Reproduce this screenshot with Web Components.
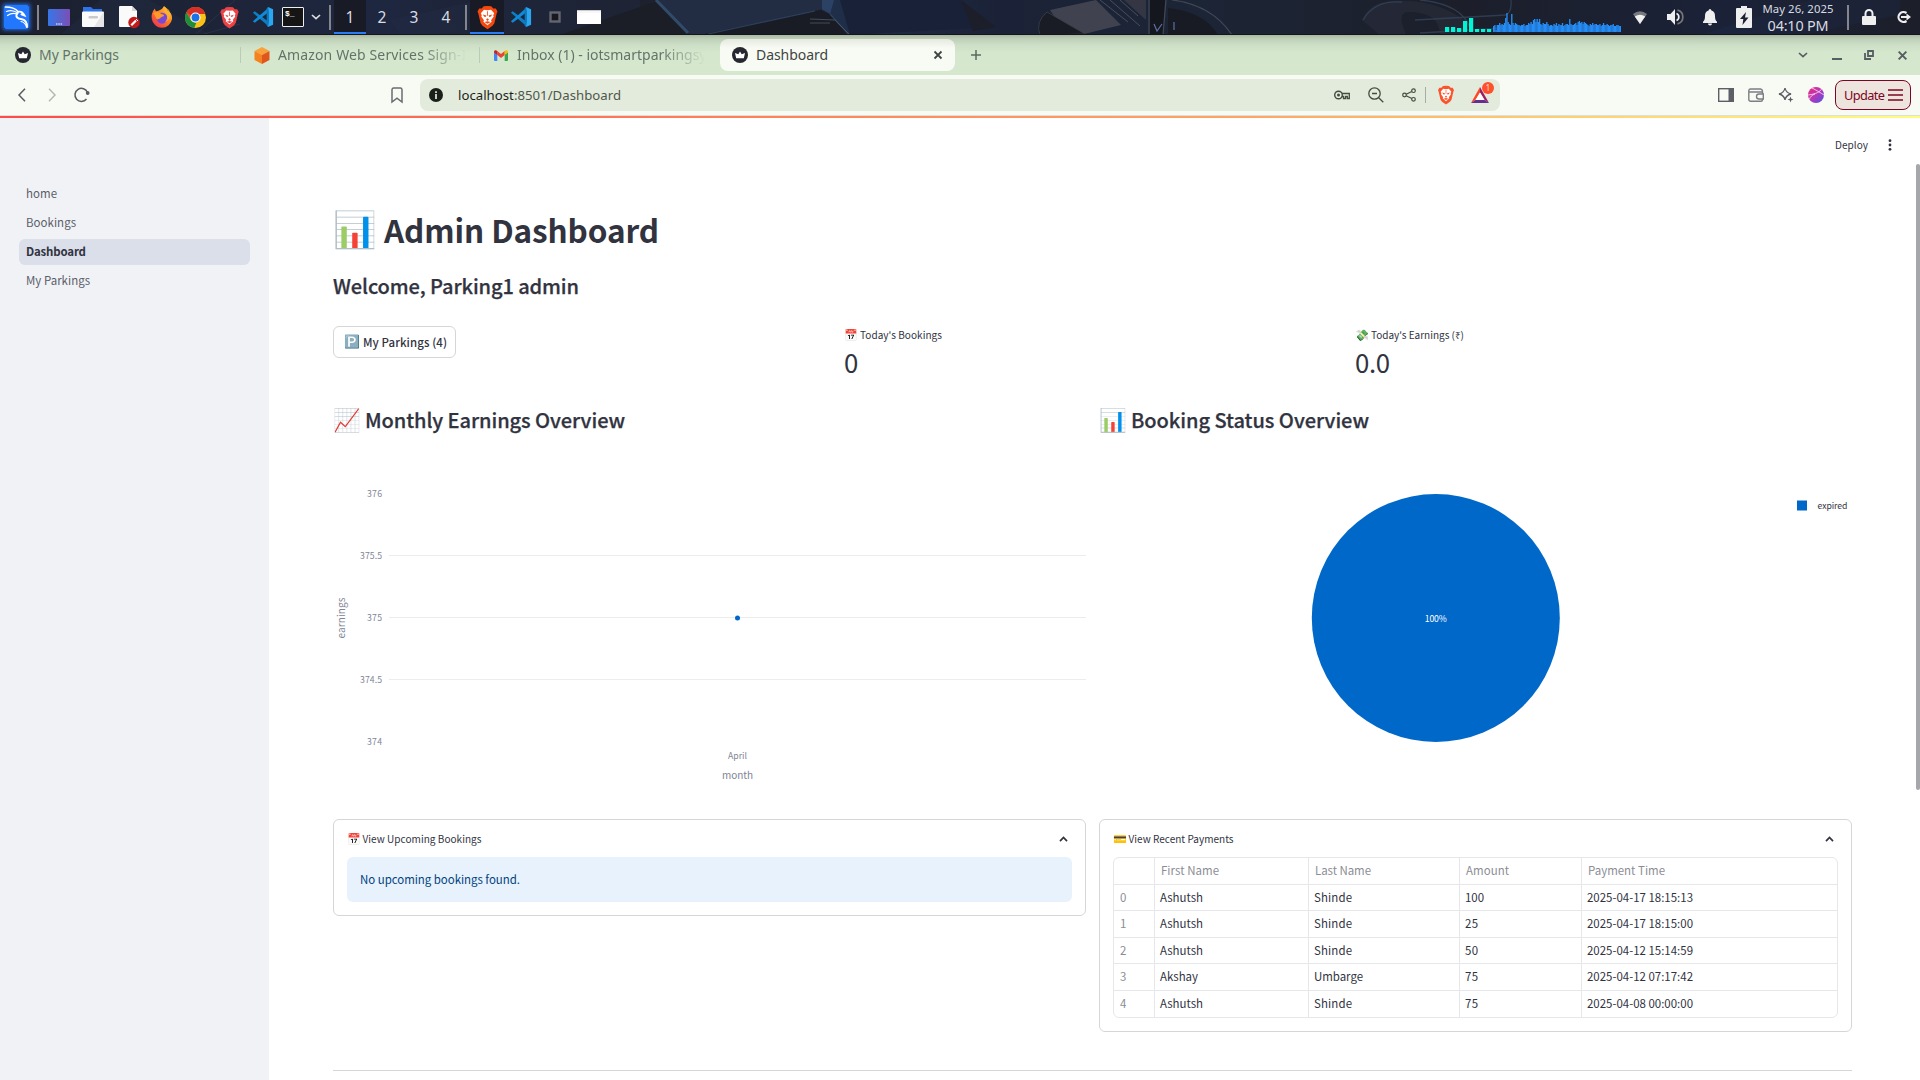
<!DOCTYPE html>
<html lang="en">
<head>
<meta charset="utf-8">
<title>Dashboard</title>
<style>
  html, body { margin: 0; height: 100%; background: #fff; }
  body { width: 1920px; height: 1080px; overflow: hidden; display: flex; flex-direction: column;
    font-family: "Noto Sans CJK SC", "Noto Sans", sans-serif; color: #31333f; }
  .page { flex: 1; display: flex; min-height: 0; }
</style>
</head>
<body>
<desktop-panel></desktop-panel>
<tab-strip></tab-strip>
<nav-toolbar></nav-toolbar>
<div class="page">
  <side-nav></side-nav>
  <dashboard-view></dashboard-view>
</div>
<script>
const BRAVE_FACE = `<path d="M12 1 15.6 1.2 17.6 3.3 20 3.4 21.6 6.2 20.8 8.2 18.6 17.6 16.8 20 12 23.4 7.2 20 5.4 17.6 3.2 8.2 2.4 6.2 4 3.4 6.4 3.3 8.4 1.2Z"/><path fill="#fff" d="M12 5 15.4 4.6 18.4 8 17.5 9.8 18 11 15.4 14.6 16 16 12 19.4 8 16 8.6 14.6 6 11 6.5 9.8 5.6 8 8.6 4.6Z"/><g fill="currentColor"><path d="M7.6 9.1 11 10.1 10.2 11.4 8.6 11Z M16.4 9.1 13 10.1 13.8 11.4 15.4 11Z M12 12.6 13.4 14 12 15.4 10.6 14Z M9 16.4 12 15.6 15 16.4 12 18Z"/><path d="M11.6 6h.8v4.4h-.8z"/></g>`;
const CROWN = `<circle cx="8" cy="8" r="8" fill="#262730"/><path fill="#fff" d="M8 4.600 9.700 7.300 13 6 11.800 11.200H4.200L3 6 6.300 7.300Z"/>`;
const VSCODE = `<path fill="#0a7fc8" d="M0 7.4 2 5.8 17 17.2V22Z"/><path fill="#0f8ad6" d="M0 16.6 2 18.2 17 6.8V2Z"/><path fill="#2aa7f0" d="M16.5 1 22 3.6V20.4L16.5 23Z"/><path fill="#1177b8" d="M16.5 1 17.5 6.6V17.4L16.5 23 15 21.6V2.4Z"/>`;
const ICONS = {
  kali: [25,24,`<rect width="25" height="24" rx="2" fill="#2277ff"/><g fill="none" stroke="#fff" stroke-linecap="round"><path stroke-width="1.700" d="M1.500 2C6 2 11 3 14 6.500"/><path stroke-width="1.200" d="M2.500 6.500C7 4.500 11 6 14 8M3.500 10.500C7 8 10 8 13 9"/><path stroke-width="1.900" d="M14 6.800C17 6 19 7.500 20.500 10.500L17.500 9.300M13.500 8C10.500 12 14 13.800 18 14.300 21.500 15 23 18 23 22"/><path stroke-width="1.100" d="M22.500 22C21.500 18 19.500 17 17 16.500"/></g>`],
  desktop: [22,17,`<defs><linearGradient id="a"><stop stop-color="#3677e8"/><stop offset="1" stop-color="#7b4fb5"/></linearGradient></defs><rect width="22" height="17" rx="1" fill="url(#a)"/><path d="M8 15h1.500M10.300 15h1.500M12.600 15h1.500" stroke="#fff" stroke-width="1.200"/>`],
  files: [22,20,`<path fill="#2f74e6" d="M1 0h8l2 2h9v5H1z"/><rect y="4.500" width="22" height="15.500" rx="1" fill="#fafafa"/><path d="M21 6 12 20h9a1 1 0 0 0 1-1V6z" fill="#e6e6e6"/><rect x="6.500" y="9" width="9.500" height="2.500" rx="1.200" fill="#c9c9c9"/>`],
  editor: [21,22,`<path fill="#fafafa" d="M1 0h12l5 5v16H1a1 1 0 0 1-1-1V1a1 1 0 0 1 1-1z"/><path fill="#d5d5d5" d="M13 0v5h5z"/><circle cx="15" cy="16.500" r="5.700" fill="#c41a1a"/><path d="M12.300 19.200 17 14.500" stroke="#fff" stroke-width="2.200"/><path d="M17 13l2 2" stroke="#fff" stroke-width="1"/>`],
  firefox: [22,22,`<defs><linearGradient id="f" x1="1" y1="0" x2=".2" y2="1"><stop stop-color="#ffe04a"/><stop offset=".45" stop-color="#ff8a1f"/><stop offset="1" stop-color="#f0324e"/></linearGradient></defs><path fill="url(#f)" d="M13 0C15 1.500 16 3 16.500 5 19 5 21.500 9 21 13A10.200 10.200 0 0 1 .8 13C.2 9 1 5.500 4 2.500 4 4 4.500 5 5.500 5.300 8 4.500 11 4 13 0Z"/><circle cx="11" cy="12.200" r="5.500" fill="#7a48d8"/><path fill="#ff9a2a" d="M2 7.500C5 5 9 6 10 8c2 0 3 .8 3 2-2 .5-3 1-4 2.500l-3 1C5 12 4 9 2 7.500Z"/><path fill="#ffb52e" d="M13 6c4 2 4 7 1 10 4-1 7-6 4-12L14 1Z" opacity=".75"/>`],
  chrome: [24,24,`<circle cx="12" cy="12" r="12" fill="#fbc116"/><path fill="#ea4335" d="M1.600 6A12 12 0 0 1 22.400 6H12A6 6 0 0 0 6.500 14.500Z"/><path fill="#d93025" d="M1.600 6A12 12 0 0 1 22.400 6l.7 2H12l-4 2Z"/><path fill="#1e8e3e" d="M1.600 6 6.800 15A6 6 0 0 0 13 18L10.500 23.900A12 12 0 0 1 1.600 6Z"/><circle cx="12" cy="12" r="5.800" fill="#fff"/><circle cx="12" cy="12" r="4.500" fill="#1a73e8"/>`],
  brave: [24,24,`<g fill="currentColor">${BRAVE_FACE}</g>`],
  vscode: [22,24,VSCODE],
  term: [22,20,`<rect x=".5" y=".5" width="21" height="19" rx=".5" fill="#151515" stroke="#eee"/>`],
  down: [10,6,`<path d="M1 1l4 3.700L9 1" fill="none" stroke="currentColor" stroke-width="1.700"/>`],
  sq: [12,12,`<rect x="1.500" y="1.500" width="9" height="9" fill="#17191f" stroke="#63656f" stroke-width="2.400"/>`],
  win: [24,14,`<rect width="24" height="14" fill="#fff"/><path d="M0 2h24" stroke="#ddd" stroke-width=".5"/><path d="M0 .5h24" stroke="#ccc"/>`],
  wifi: [14,14,`<path fill="#77797f" d="M7 14 0 4Q7-1.500 14 4Z"/><path fill="#efefef" d="M7 14 1.800 6.500Q7 2.800 12.200 6.500Z"/>`],
  volume: [17,16,`<path fill="#efefef" d="M0 5h3.500L8 0v16L3.500 11H0z"/><path fill="none" stroke="#efefef" stroke-width="1.700" d="M9.500 4.500a3.800 3.800 0 0 1 0 7"/><path fill="none" stroke="#777" stroke-width="1.700" d="M10.500 1.200a7 7 0 0 1 0 13.600"/>`],
  bell: [14,16,`<path fill="#efefef" d="M7 0a1.500 1.500 0 0 1 1.400 1.400C11 2 12 4 12 7c0 3 .5 4.500 2 5.700V14H0v-1.300C1.500 11.500 2 10 2 7c0-3 1-5 3.600-5.600A1.500 1.500 0 0 1 7 0ZM5 14.500h4a2 2 0 0 1-4 0Z"/>`],
  battery: [16,22,`<path fill="#efefef" d="M5 0h6v2h4a1 1 0 0 1 1 1v18a1 1 0 0 1-1 1H1a1 1 0 0 1-1-1V3a1 1 0 0 1 1-1h4z"/><path fill="#1d2230" d="M10 6 4 13h3.300L6.500 19 12.500 11.500H9z"/>`],
  lock: [14,16,`<path fill="#efefef" d="M1 7h12a1 1 0 0 1 1 1v7a1 1 0 0 1-1 1H1a1 1 0 0 1-1-1V8a1 1 0 0 1 1-1z"/><path fill="none" stroke="#efefef" stroke-width="2" d="M3.500 8V4.500a3.500 3.500 0 0 1 7 0V8"/>`],
  logout: [15,14,`<path fill="none" stroke="#efefef" stroke-width="2.200" d="M10.500 3A5 5 0 1 0 10.500 11"/><path fill="#efefef" d="M5 6h5.500V3.500L15 7l-4.500 3.500V8H5z"/>`],
  crown: [16,16,CROWN],
  aws: [16,17,`<path fill="#f9a13a" d="M8 0 15.500 4 8 8 .5 4Z"/><path fill="#f58220" d="M.5 4 8 8v9L.5 13Z"/><path fill="#e0571c" d="M15.500 4 8 8v9l7.500-4Z"/>`],
  gmail: [14,11,`<path fill="#4285f4" d="M0 2v8a1 1 0 0 0 1 1h2.300V4.500z"/><path fill="#34a853" d="M14 2v8a1 1 0 0 1-1 1h-2.300V4.500z"/><path fill="#ea4335" d="M3.300 1 7 4l3.700-3v4L7 8 3.300 5z"/><path fill="#c5221f" d="M0 2C0 0 2-.5 3.300 1v4L0 2.500z"/><path fill="#fbbc04" d="M14 2c0-2-2-2.500-3.300-1v4L14 2.500z"/>`],
  close: [10,10,`<path d="M1.500 1.500l7 7M8.500 1.500l-7 7" stroke="currentColor" stroke-width="1.800"/>`],
  plus: [10,10,`<path d="M5 0v10M0 5h10" stroke="#5d6862" stroke-width="1.500"/>`],
  min: [10,2,`<path d="M0 1h10" stroke="#565d63" stroke-width="2"/>`],
  restore: [10,10,`<path d="M4 1h5v5H4zM1 3v6h6" fill="none" stroke="#565d63" stroke-width="1.800"/>`],
  back: [8,14,`<path d="M7 .7 1 7l6 6.300" fill="none" stroke="currentColor" stroke-width="1.500"/>`],
  fwd: [8,14,`<path d="M1 .7 7 7l-6 6.300" fill="none" stroke="currentColor" stroke-width="1.500"/>`],
  reload: [16,16,`<path d="M13.500 5.500A6.500 6.500 0 1 0 12.500 12" fill="none" stroke="#585b66" stroke-width="1.500"/><circle cx="13.700" cy="6" r="1.900" fill="#585b66"/>`],
  bookmark: [12,16,`<path d="M1 2.500A1.700 1.700 0 0 1 2.700 1h6.600A1.700 1.700 0 0 1 11 2.500V15L6 11.200 1 15z" fill="none" stroke="#6a6c74" stroke-width="1.500"/>`],
  info: [14,14,`<circle cx="7" cy="7" r="7" fill="#1b1f1a"/><path d="M7 3.200v1.700M7 6v5" stroke="#e3ebdc" stroke-width="1.700"/>`],
  key: [16,10,`<circle cx="4.500" cy="5" r="3.800" fill="none" stroke="#444b41" stroke-width="1.400"/><circle cx="4.500" cy="5" r="1.500" fill="#444b41"/><path d="M8 3.500h7.300v5h-2v-2H11.500v2H9.500v-2H8" fill="none" stroke="#444b41" stroke-width="1.300"/>`],
  zoomout: [16,16,`<circle cx="6.500" cy="6.500" r="5.700" fill="none" stroke="#444b41" stroke-width="1.300"/><path d="M4 6.500h5M10.700 10.700 15.300 15.300" stroke="#444b41" stroke-width="1.300"/>`],
  share: [14,14,`<g fill="none" stroke="#444b41" stroke-width="1.200"><circle cx="2.500" cy="7" r="1.800"/><circle cx="11.500" cy="2.700" r="1.800"/><circle cx="11.500" cy="11.300" r="1.800"/><path d="M4.200 6.200 9.800 3.500M4.200 7.800 9.800 10.500"/></g>`],
  bat: [18,16,`<path fill="#ff4724" d="M9 0 0 16 4.500 13 9 5.500z"/><path fill="#9e1f63" d="M9 0v5.500L13.500 13 18 16z"/><path fill="#662d91" d="M0 16h18l-4.500-3h-9z"/><path fill="#fff" d="M9 5.500 4.500 13h9z"/>`],
  panel: [16,14,`<rect x=".7" y=".7" width="14.600" height="12.600" fill="none" stroke="#5d5f68" stroke-width="1.400"/><path d="M10.500 1h5v12h-5z" fill="#5d5f68"/>`],
  wallet: [16,14,`<g fill="none" stroke="#7b7e84" stroke-width="1.400"><path d="M14.500 4V3.500A2.500 2.500 0 0 0 12.500 1H2.500A1.800 1.800 0 0 0 .8 2.500v9a1.800 1.800 0 0 0 1.800 1.800H13a1.500 1.500 0 0 0 1.500-1.500M1 4h13.500v2M15.300 6H11a2.200 2.200 0 0 0 0 5h4.300z"/></g>`],
  leo: [16,16,`<path d="M7 1C7.700 4.700 9 6 13 7c-3.700.8-5.300 2.300-6 6C6.300 9.300 4.700 7.800 1 7 4.700 6.200 6.300 4.700 7 1Z" fill="none" stroke="#585b66" stroke-width="1.300"/><path d="M12.500 9.500l.8 2.200 2.200.8-2.200.8-.8 2.200-.8-2.200-2.200-.8 2.200-.8z" fill="#585b66"/>`],
  ball: [16,16,`<defs><linearGradient id="b" x1="0" y1="0" x2="1" y2="1"><stop stop-color="#ee2a78"/><stop offset=".5" stop-color="#b637b8"/><stop offset="1" stop-color="#4a56e8"/></linearGradient></defs><circle cx="8" cy="8" r="8" fill="url(#b)"/><path d="M0 8C5 7.500 11 6 13.500 2.200M4 1C8 3 13 6 16 8M7 7C4 8 2 10 1.500 12" fill="none" stroke="#fbd5ee" stroke-width=".9"/>`],
  lines: [15,12,`<path d="M0 1h15M0 6h15M0 11h15" stroke="#7d0424" stroke-width="1.300"/>`],
  up: [9,6,`<path d="M1 5.200 4.500 1.500 8 5.200" fill="none" stroke="#31333f" stroke-width="1.700"/>`],
  dots: [4,12,`<g fill="#31333f"><circle cx="2" cy="1.700" r="1.400"/><circle cx="2" cy="6" r="1.400"/><circle cx="2" cy="10.300" r="1.400"/></g>`]
};

/* Base class: clones a template of styles and markup into an open shadow root. */
class Shadow extends HTMLElement {
  connectedCallback() {
    if (this.shadowRoot) return;
    const t = document.createElement('template');
    t.innerHTML = `<style>:host,*{box-sizing:border-box}${this.css()}</style>${this.html()}`;
    this.attachShadow({ mode: 'open' }).append(t.content.cloneNode(true));
    this.ready?.();
  }
  css() { return ''; }
  html() { return '<slot></slot>'; }
}
const define = (n, c) => customElements.define(n, c);

/* <ui-icon name w h> : inline SVG glyph */
define('ui-icon', class extends Shadow {
  css() { return ':host{display:block;flex:none;line-height:0}svg{display:block;overflow:visible}'; }
  html() {
    const [w, h, d] = ICONS[this.getAttribute('name')];
    const W = this.getAttribute('w') || w, H = this.getAttribute('h') || h;
    return `<svg width="${W}" height="${H}" viewBox="0 0 ${w} ${h}">${d}</svg>`;
  }
});

/* <fit-text w> : one line of text tracked to an exact advance width */
define('fit-text', class extends Shadow {
  css() { return ':host{display:block;flex:none;white-space:pre;width:max-content}'; }
  ready() {
    const w = parseFloat(this.getAttribute('w'));
    if (!w) return;
    const n = [...this.textContent].length, nat = this.getBoundingClientRect().width;
    this.style.letterSpacing = ((w - nat) / Math.max(1, n - 1)).toFixed(3) + 'px';
  }
});

define('desktop-panel', class extends Shadow {
  css() { return `
    :host{display:block;height:35px;flex:none;background:#1d1f2b;position:relative;overflow:hidden;font-family:"Noto Sans",sans-serif;color:#d9dbe0;border-bottom:1px solid #15161d}
    .bg{position:absolute;inset:0;z-index:0}
    .row{position:relative;display:flex;align-items:center;height:34px}
    .row>*{margin-left:var(--g,0)}
    .sep{width:2px;height:25px;background:#85868d;flex:none}
    .ws{width:32px;height:34px;display:flex;align-items:center;justify-content:center;font-size:15.5px;flex:none}
    .on{background:#181a25;box-shadow:inset 0 -2px #2a7cf6}
    .task{width:34px;height:34px;display:flex;align-items:center;justify-content:center;flex:none}
    .term{display:grid}.term>*{grid-area:1/1}
    .term fit-text{font:bold 8px "Liberation Mono",monospace;color:#fff;padding:2px 0 0 3px}
    .clock{display:flex;flex-direction:column;align-items:center;width:72px;flex:none;height:34px}
    .d{font-size:11.3px;line-height:17px}.t{font-size:14.400px;line-height:17px}`; }
  html() {
    const heights = [6,7,2,7,7,9,7,8,7,9,14,19,10,8,7,18,9,7,9,8,7,7,6,7,7,8,6,7,7,9,8,10,8,12,13,10,13,10,13,8,7,9,8,8,10,8,6,7,7,6,8,7,9,6,8,7,7,9,6,7,8,8,7,13,8,7,7,8,9,7,10,11,9,10,8,10,9,8,7,6,8,7,9,7,8,8,7,7,8,6,7,9,7,7,8,7,6,7,7,8,6,6,7,7,6,6];
    const step = 128 / heights.length;
    const graph = heights.map((h, i) => `<rect x="${(48 + i * step).toFixed(2)}" y="${30 - h}" width="${step + .15}" height="${h}"/>`).join('');
    const cyan = [5,5,4,11,14,3,3,3].map((h, i) => `<rect x="${i * 6}" y="${30 - h}" width="4.200" height="${h}"/>`).join('');
    const i = (n, g, w, h, x = '') => `<ui-icon name="${n}" w="${w}" h="${h}" style="--g:${g}px;${x}"></ui-icon>`;
    return `
    <svg class="bg" width="1920" height="35">
      <defs><linearGradient id="s"><stop stop-color="#1c202e"/><stop offset=".2" stop-color="#1e2740"/><stop offset=".32" stop-color="#1c1e29"/><stop offset=".42" stop-color="#20304c"/><stop offset=".52" stop-color="#1b2237"/><stop offset=".62" stop-color="#1c2536"/><stop offset=".76" stop-color="#1c1f2a"/><stop offset=".9" stop-color="#1b2238"/><stop offset="1" stop-color="#1c1e29"/></linearGradient>
      <linearGradient id="d"><stop stop-color="#1c1e29" stop-opacity="0"/><stop offset=".5" stop-color="#1c1e29"/></linearGradient></defs>
      <rect width="1920" height="35" fill="url(#s)"/>
      <path d="M60 35 100 0H150L210 35ZM390 20 480 0H640V12L560 35H400Z" fill="#222d47" opacity=".4"/>
      <path d="M195 35 235 0M204 34 240 24" stroke="#42506a" opacity=".3"/>
      <path d="M560 35 660 0H655L690 35Z" fill="#1b1d27"/>
      <path d="M658 0H830L824 9 700 35H690Z" fill="#222d43"/>
      <path d="M824 9 700 35H850L830 14Z" fill="#1a1c25"/>
      <path d="M656 0 688 33" stroke="#38597e" stroke-width="3" fill="none" opacity=".75"/>
      <path d="M708 34 815 11M830 14 849 35" stroke="#38597e" stroke-width="1.200" fill="none" opacity=".6"/>
      <path d="M822 0V10L830 14 834 0Z" fill="#34507a" opacity=".6"/>
      <path d="M810 19 835 20 850 35M810 23h20" stroke="#4b5a66" stroke-width=".8" fill="none"/>
      <path d="M840 0H960L994 27 850 35Z" fill="#192139"/>
      <path d="M961 0 996 27 973 31Z" fill="#1c1e29"/>
      <path d="M1050 10 1096 0 1121 25 1084 34 1062 28Z" fill="#40434f"/>
      <path d="M1047 12Q1035 22 1040 35L1085 34Z" fill="#1a1c25" stroke="#3d3f49" stroke-width=".8"/>
      <path d="M1100 0 1128 22M1110 0 1140 26M1120 0 1138 16" stroke="#4a4e58" stroke-width="1" fill="none"/>
      <path d="M1124 0 1146 20V0Z" fill="#343743"/>
      <path d="M1150 0V35H1163L1165 0Z" fill="#15171f"/>
      <path d="M1149 0V35M1166 0 1163 35M1172 0Q1212 5 1232 35" stroke="#414857" stroke-width="1.200" fill="none"/>
      <path d="M1168 8Q1205 12 1218 35H1168Z" fill="#191b24"/>
      <path d="M1154 24 1157 31 1162 24M1174 22v8" stroke="#5d70a8" stroke-width="1.200" fill="none"/>
      <path d="M1362 20Q1372-2 1402 1 1438 0 1467 22V35H1440Q1440 12 1408 12 1396 12 1406 35H1380Z" fill="#272b38" opacity=".8"/>
      <path d="M1363 20Q1374 0 1402 2M1420 0Q1462 4 1470 28M1415 20 1506 15Q1512 12 1511 0M1420 33 1504 28" stroke="#33435a" stroke-width="1.300" fill="none" opacity=".8"/>
      <path d="M1700 35 1810 0H1900V15L1800 35Z" fill="#1d2a48" opacity=".35"/>
    </svg>
    <div class="row">
      ${i('kali',4,25,24,'box-shadow:0 0 4px 1px #2370ea')}<div class="sep" style="--g:8px"></div>
      ${i('desktop',9,22,17)}${i('files',12,22,20)}${i('editor',15,21,22)}${i('firefox',11,22,22)}${i('chrome',12,21,21)}
      ${i('brave',12,23,23,'color:#ed4245')}${i('vscode',11,22,22)}
      <div class="term" style="--g:8px"><ui-icon name="term"></ui-icon><fit-text>$_</fit-text></div>
      ${i('down',7,10,6,'color:#ddd')}<div class="sep" style="--g:8px"></div>
      <div class="ws on" style="--g:3px">1</div><div class="ws">2</div><div class="ws">3</div><div class="ws">4</div>
      <div class="sep" style="--g:3px"></div>
      <div class="task on" style="--g:3px">${i('brave',0,25,25,'color:#f4480f')}</div>
      ${i('vscode',6,22,22)}${i('sq',17,12,12)}${i('win',16,24,14)}
      <svg style="--g:844px;flex:none" width="176" height="30"><g fill="#00f5d4">${cyan}</g><g fill="#258df6">${graph}</g></svg>
      ${i('wifi',12,14,14)}${i('volume',20,17,16)}${i('bell',19,14,16)}${i('battery',19,16,22)}
      <div class="clock" style="--g:10px"><fit-text class="d" w="71">May 26, 2025</fit-text><fit-text class="t" w="61">04:10 PM</fit-text></div>
      <div class="sep" style="--g:13px"></div>${i('lock',13,14,16)}${i('logout',20,15,14)}
    </div>`; }
});

define('browser-tab', class extends Shadow {
  css() { return `
    :host{display:flex;align-items:center;height:32px;padding-left:15px;gap:8px;font:14px/20px "Noto Sans",sans-serif;color:#64736a;flex:none;overflow:hidden}
    .label{flex:1;overflow:hidden}
    :host([active]){background:linear-gradient(#e5e9e0,#f8fbf3 9px);border-radius:8px;color:#3f4543;padding:0 12px}
    :host([fade]) .label{-webkit-mask:linear-gradient(90deg,#000 calc(100% - 45px),transparent);mask:linear-gradient(90deg,#000 calc(100% - 45px),transparent)}
    .sep{width:1px;height:16px;background:#bccabb;margin-left:5px}`; }
  html() { return `<ui-icon name="${this.getAttribute('icon')}"></ui-icon><div class="label"><slot></slot></div>${this.hasAttribute('active') ? '<ui-icon name="close"></ui-icon>' : this.hasAttribute('last') ? '' : '<div class="sep"></div>'}`; }
});

define('tab-strip', class extends Shadow {
  css() { return `
    :host{display:flex;align-items:center;height:40px;flex:none;background:linear-gradient(#a9b9a3,#bfd0b8 4px,#cddfc6 10px,#d5e8cd 18px,#d5e8cd);padding-right:12px}
    .tools{margin-left:auto;display:flex;align-items:center;color:#565d63}`; }
  html() { return `
    <browser-tab icon="crown" style="width:241px"><fit-text w="80">My Parkings</fit-text></browser-tab>
    <browser-tab icon="aws" fade style="width:239px;padding-left:13px"><fit-text w="197">Amazon Web Services Sign-In</fit-text></browser-tab>
    <browser-tab icon="gmail" last fade style="width:240px;padding-left:14px;padding-right:15px;gap:9px"><fit-text>Inbox (1) - iotsmartparkingsystem</fit-text></browser-tab>
    <browser-tab icon="crown" active style="width:235px"><fit-text w="72">Dashboard</fit-text></browser-tab>
    <ui-icon name="plus" style="margin-left:16px"></ui-icon>
    <div class="tools"><ui-icon name="down"></ui-icon><ui-icon name="min" style="margin:8px 22px 0 24px"></ui-icon><ui-icon name="restore" style="margin-right:23px"></ui-icon><ui-icon name="close" w="11" h="11"></ui-icon></div>`; }
});

define('nav-toolbar', class extends Shadow {
  css() { return `
    :host{display:block;height:43px;flex:none;background:#f8fbf3;font-family:"Noto Sans",sans-serif}
    .row{display:flex;align-items:center;height:40px;color:#585b66;padding-left:18px}
    .omni{margin-left:17px;width:1080px;height:32px;border-radius:8px;background:#e3ebdc;display:flex;align-items:center;padding-left:9px;font-size:13.200px;color:#50564d}
    .url{display:flex;margin-left:15px}
    .url b{font-weight:400;color:#1b1f1a}
    .right{margin-left:auto;display:flex;align-items:center}
    .vs{width:1px;height:16px;background:#a7ada2;margin:0 10px 0 9px}
    .batw{position:relative}
    .badge{position:absolute;left:11px;top:-5px;width:12px;height:12px;border-radius:6px;background:#ff4f2b;color:#ffd9cf;font-size:8.500px;line-height:12px;text-align:center}
    .actions{display:flex;align-items:center;margin-left:218px}
    .update{margin-left:11px;width:76px;height:30px;border:1px solid #7d0424;border-radius:8px;background:#ede4dd;color:#7d0424;font-size:12.800px;display:flex;align-items:center;padding-left:8px;gap:4px}
    .edge{height:1px;background:#dce1d8}
    .bar{height:2px;background:linear-gradient(90deg,#ff4b4b,#ffa765 66%,#fffd80)}`; }
  html() { return `
    <div class="row">
      <ui-icon name="back"></ui-icon><ui-icon name="fwd" style="margin-left:22px;color:#b4b8b3"></ui-icon><ui-icon name="reload" style="margin-left:18px"></ui-icon>
      <ui-icon name="bookmark" style="margin-left:301px"></ui-icon>
      <div class="omni"><ui-icon name="info"></ui-icon>
        <div class="url"><fit-text w="163"><b>localhost</b>:8501/Dashboard</fit-text></div>
        <div class="right" style="padding-right:11px">
          <ui-icon name="key"></ui-icon><ui-icon name="zoomout" style="margin-left:18px"></ui-icon><ui-icon name="share" style="margin-left:18px"></ui-icon>
          <div class="vs"></div><ui-icon name="brave" w="20" h="20" style="color:#fb542b"></ui-icon>
          <div class="batw" style="margin-left:15px"><ui-icon name="bat"></ui-icon><div class="badge">1</div></div>
        </div>
      </div>
      <div class="actions">
        <ui-icon name="panel"></ui-icon><ui-icon name="wallet" style="margin-left:14px"></ui-icon><ui-icon name="leo" style="margin-left:14px"></ui-icon><ui-icon name="ball" style="margin-left:14px"></ui-icon>
        <div class="update"><fit-text w="41">Update</fit-text><ui-icon name="lines"></ui-icon></div>
      </div>
    </div>
    <div class="edge"></div><div class="bar"></div>`; }
});

define('side-nav', class extends Shadow {
  css() { return `
    :host{display:flex;flex-direction:column;gap:2.800px;width:269px;flex:none;background:#f0f2f6;padding:63.400px 19px 0;font-size:11.460px}
    .i{height:26px;border-radius:6px;padding:0 7px;color:#5b5d68;line-height:25px}
    .on{background:#dbdfe9;color:#31333f;font-weight:600}`; }
  html() { return [['home',31],['Bookings',50],['Dashboard',60,1],['My Parkings',64]].map(([t, w, a]) => `<div class="i ${a ? 'on' : ''}"><fit-text w="${w}">${t}</fit-text></div>`).join(''); }
});

/* Colour emoji followed by a line of text */
define('emoji-heading', class extends Shadow {
  css() { return ':host{display:flex;align-items:center}.e{font-family:"Noto Color Emoji",sans-serif;font-weight:400;flex:none;line-height:1;width:var(--ew);margin-right:var(--eg);margin-top:var(--ey,0);white-space:nowrap}'; }
  html() { return `<span class="e"><slot name="emoji"></slot></span><slot></slot>`; }
});

define('metric-tile', class extends Shadow {
  css() { return `
    :host{display:flex;flex-direction:column;height:60px}
    .l{height:18px;font-size:10.030px;--ew:13px;--eg:3px;--ey:2px}
    .l span{font-size:11.200px}
    .l fit-text{margin-top:-1px}
    .v{font-size:25.800px;line-height:36px}`; }
  html() { return `<emoji-heading class="l"><span slot="emoji">${this.getAttribute('emoji')}</span><fit-text w="${this.getAttribute('lw')}">${this.getAttribute('label')}</fit-text></emoji-heading><fit-text class="v" w="${this.getAttribute('vw')}">${this.getAttribute('value')}</fit-text>`; }
});

define('earnings-chart', class extends Shadow {
  css() { return ':host{display:block}svg{display:block;font-size:8.700px;fill:#808495}'; }
  html() {
    const ticks = [[376,57,15],[375.5,118.5,22],[375,180.5,15],[374.5,242.5,22],[374,305,15]];
    return `<svg width="753" height="363">
      ${ticks.map(([t, y, w]) => `<text x="49" y="${y + 3.300}" text-anchor="end" textLength="${w}">${t}</text>`).join('')}
      ${[118.5,180.5,242.5].map(y => `<path d="M56 ${y}H753" stroke="#ebecf0"/>`).join('')}
      <circle cx="404.500" cy="181" r="2.500" fill="#0068c9"/>
      <text x="404.500" y="322" text-anchor="middle" textLength="19">April</text>
      <text x="404.500" y="341.500" text-anchor="middle" textLength="31" font-size="10">month</text>
      <text transform="translate(11.500 181) rotate(-90)" text-anchor="middle" textLength="41" font-size="10">earnings</text>
    </svg>`; }
});

define('status-pie', class extends Shadow {
  css() { return ':host{display:block}svg{display:block;font-size:8.700px}'; }
  html() { return `<svg width="753" height="363">
      <circle cx="336.800" cy="181" r="124" fill="#0068c9"/>
      <text x="336.800" y="184.500" text-anchor="middle" textLength="22" fill="#fff">100%</text>
      <rect x="698" y="63.500" width="10" height="10" fill="#0068c9"/>
      <text x="718.500" y="71.500" textLength="30" fill="#31333f">expired</text>
    </svg>`; }
});

define('expander-card', class extends Shadow {
  css() { return `
    :host{display:block;border:1px solid #d6d6d9;border-radius:6px;padding:0 13px 13px}
    .h{display:flex;align-items:center;justify-content:space-between;height:37px;padding-right:4px}
    emoji-heading{font-size:10.030px;--ew:13px;--eg:2.500px;--ey:2px}
    emoji-heading span{font-size:11.200px}
    fit-text{margin-top:-1px}`; }
  html() { return `<div class="h"><emoji-heading><span slot="emoji">${this.getAttribute('emoji')}</span><fit-text w="${this.getAttribute('lw')}">${this.getAttribute('label')}</fit-text></emoji-heading><ui-icon name="up"></ui-icon></div><slot></slot>`; }
});

define('info-note', class extends Shadow {
  css() { return ':host{display:flex;align-items:center;height:45px;border-radius:6px;background:#e8f2fc;color:#004280;font-size:11.460px;padding:0 13px 2px}'; }
});

define('data-table', class extends Shadow {
  css() { return `
    :host{display:block;border:1px solid #e6e7ea;border-radius:6px;font-size:11.460px;overflow:hidden}
    .g{display:grid;grid-template-columns:41px 154px 151px 122px 1fr;grid-template-rows:27px 26px 27px 26px 27px 26px}
    .c{border-right:1px solid #e6e7ea;border-bottom:1px solid #e6e7ea;padding:0 5px;display:flex;align-items:center;padding-bottom:2px}
    .c:nth-child(5n){border-right:0}.c:nth-child(n+26){border-bottom:0}
    .c:nth-child(-n+5){color:#8b8d96;padding-left:6px}
    .c:nth-child(5n+1){color:#8b8d96;padding-left:6px}`; }
  html() {
    const rows = [['',['First Name',58],['Last Name',56],['Amount',43],['Payment Time',77]],
      [['0',6],['Ashutsh',43],['Shinde',38],['100',19],['2025-04-17 18:15:13',106]],
      [['1',6],['Ashutsh',43],['Shinde',38],['25',13],['2025-04-17 18:15:00',106]],
      [['2',6],['Ashutsh',43],['Shinde',38],['50',13],['2025-04-12 15:14:59',106]],
      [['3',6],['Akshay',38],['Umbarge',49],['75',13],['2025-04-12 07:17:42',106]],
      [['4',6],['Ashutsh',43],['Shinde',38],['75',13],['2025-04-08 00:00:00',106]]];
    return `<div class="g">${rows.flat().map(c => `<div class="c">${c ? `<fit-text w="${c[1]}">${c[0]}</fit-text>` : ''}</div>`).join('')}</div>`;
  }
});

define('dashboard-view', class extends Shadow {
  css() { return `
    :host{flex:1;display:flex;flex-direction:column;background:#fff;padding-left:64px;min-width:0;position:relative}
    header{height:53px;display:flex;align-items:center;justify-content:flex-end;padding-right:28px;font-size:10.030px}
    header ui-icon{margin-left:20px}
    .body{width:1519px;display:flex;flex-direction:column}
    .h1{margin-top:34px;height:50px;font-size:31.500px;font-weight:700;--ew:43px;--eg:8px;--ey:1px}
    .h1 span{font-size:35.200px}
    .h1 fit-text{margin-top:-3px}
    .h3{font-size:20.050px;font-weight:500;line-height:30px;-webkit-text-stroke:.25px #31333f}
    .welcome{margin-top:16px;height:30px}
    .metrics{margin-top:25px;display:grid;grid-template-columns:511px 511px 1fr;height:60px}
    .btn{width:123px;height:32px;border:1px solid #d6d6d9;border-radius:6px;display:flex;align-items:center;padding-left:10px;font-size:11.460px;--ew:15px;--eg:4px}
    .btn span{font-size:12.800px}.btn fit-text{font-weight:500}
    .two{display:grid;grid-template-columns:753px 753px;gap:13px;align-items:start}
    .heads{margin-top:17px;height:34px}
    .heads emoji-heading{height:34px;--ew:27px;--eg:5px}
    .heads span{font-size:22.400px;-webkit-text-stroke:0}
    .cards{margin-top:19px;height:251px}
    hr{border:0;height:1px;background:#d6d6d9;margin:0}
    .thumb{position:absolute;right:0;top:46px;width:4px;height:626px;background:#a6a7ab;border-radius:2px}`; }
  html() { return `
    <header><fit-text w="33">Deploy</fit-text><ui-icon name="dots"></ui-icon></header>
    <div class="body">
      <emoji-heading class="h1"><span slot="emoji">📊</span><fit-text w="275">Admin Dashboard</fit-text></emoji-heading>
      <fit-text class="h3 welcome" w="246">Welcome, Parking1 admin</fit-text>
      <div class="metrics">
        <div class="btn"><emoji-heading><span slot="emoji">🅿️</span><fit-text w="84">My Parkings (4)</fit-text></emoji-heading></div>
        <metric-tile emoji="📅" label="Today's Bookings" lw="82" value="0" vw="14"></metric-tile>
        <metric-tile emoji="💸" label="Today's Earnings (₹)" lw="93" value="0.0" vw="35"></metric-tile>
      </div>
      <div class="two heads">
        <emoji-heading class="h3"><span slot="emoji">📈</span><fit-text w="260">Monthly Earnings Overview</fit-text></emoji-heading>
        <emoji-heading class="h3"><span slot="emoji">📊</span><fit-text w="238">Booking Status Overview</fit-text></emoji-heading>
      </div>
      <div class="two"><earnings-chart></earnings-chart><status-pie></status-pie></div>
      <div class="two cards">
        <expander-card emoji="📅" label="View Upcoming Bookings" lw="119"><info-note><fit-text w="160">No upcoming bookings found.</fit-text></info-note></expander-card>
        <expander-card emoji="💳" label="View Recent Payments" lw="105"><data-table></data-table></expander-card>
      </div>
      <hr>
    </div>
    <div class="thumb"></div>`; }
});
</script>
</body>
</html>
